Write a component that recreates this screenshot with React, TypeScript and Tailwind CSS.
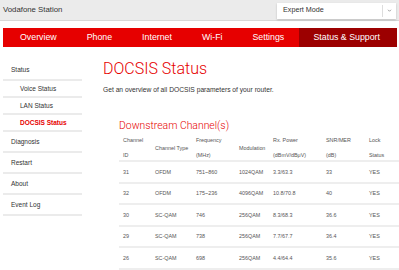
const NAV_ITEMS = ["Overview", "Phone", "Internet", "Wi-Fi", "Settings"];

const SIDEBAR = [
  { label: "Status", sub: false },
  { label: "Voice Status", sub: true },
  { label: "LAN Status", sub: true },
  { label: "DOCSIS Status", sub: true, active: true },
  { label: "Diagnosis", sub: false },
  { label: "Restart", sub: false },
  { label: "About", sub: false },
  { label: "Event Log", sub: false },
];

const ROWS = [
  ["31", "OFDM", "751~860", "1024QAM", "3.3/63.3", "33", "YES"],
  ["32", "OFDM", "175~236", "4096QAM", "10.8/70.8", "40", "YES"],
  ["30", "SC-QAM", "746", "256QAM", "8.3/68.3", "36.6", "YES"],
  ["29", "SC-QAM", "738", "256QAM", "7.7/67.7", "36.4", "YES"],
  ["26", "SC-QAM", "698", "256QAM", "4.4/64.4", "35.6", "YES"],
];

const GRID = "grid grid-cols-[32px_41px_43px_34px_53px_43px_32px]";

export default function App() {
  return (
    <div className="h-[270px] w-[399px] overflow-hidden bg-white font-['Liberation_Sans',Arial,sans-serif] text-[#333]">
      {/* top bar */}
      <div className="flex h-[21px] items-center justify-between border-b border-[#d8d8d8] bg-[#ebebeb] pl-[3px] pr-[3px]">
        <span className="text-[7.8px]">Vodafone Station</span>
        <div className="mt-[1px] flex h-[16px] w-[119px] items-center bg-white shadow-[0_1px_2px_rgba(0,0,0,0.2)]">
          <span className="flex-1 pl-[6px] text-[7.2px]">Expert Mode</span>
          <span className="h-[12px] w-px bg-[#ddd]" />
          <svg className="mx-[4px] h-[5px] w-[5px] text-[#777]" viewBox="0 0 10 10" fill="none" stroke="currentColor" strokeWidth={1.4}>
            <path d="M2 3.5l3 3 3-3" />
          </svg>
        </div>
      </div>

      {/* main nav */}
      <div className="ml-[3px] mt-[7px] flex h-[19px] w-[394px] items-center bg-[#e60000] text-[8.8px] text-white">
        {NAV_ITEMS.map((item, i) => (
          <span key={item} className={`px-[15px] ${i === 0 ? "pl-[17px]" : ""}`}>
            {item}
          </span>
        ))}
        <span className="ml-auto flex h-full items-center bg-[#9c0000] pl-[14px] pr-[17px]">
          Status &amp; Support
        </span>
      </div>

      <div className="flex">
        {/* sidebar */}
        <div className="ml-[3px] mt-[13px] w-[79px] text-[6.5px]">
          {SIDEBAR.map((s) => (
            <div
              key={s.label}
              className={`flex items-center border-b-2 border-[#ebebeb] ${
                s.sub ? "h-[17px] pl-[17px]" : "h-[21px] pl-[8px]"
              } ${s.active ? "font-bold text-[#e60000]" : ""}`}
            >
              {s.label}
            </div>
          ))}
        </div>

        {/* content */}
        <div className="ml-[21px] flex-1">
          <h1 className="mt-[14px] font-['Roboto',sans-serif] text-[16px] font-light leading-[16px] text-[#e60000]">
            DOCSIS Status
          </h1>
          <p className="mt-[8px] text-[6.7px]">
            Get an overview of all DOCSIS parameters of your router.
          </p>
          <h2 className="ml-[16px] mt-[25px] font-['Roboto',sans-serif] text-[10.4px] font-light leading-[12px] text-[#e60000]">
            Downstream Channel(s)
          </h2>

          <div className="ml-[16px] mt-[1px] text-[5.4px] text-[#555]">
            <div className={`${GRID} h-[29px] items-center border-b-2 border-[#eeeeee] leading-[15px]`}>
              <span className="pl-[4px]">Channel<br />ID</span>
              <span className="pl-[4px]">Channel Type</span>
              <span className="pl-[4px]">Frequency<br />(MHz)</span>
              <span className="pl-[4px]">Modulation</span>
              <span className="pl-[4px]">Rx. Power<br />(dBmV/dBμV)</span>
              <span className="pl-[4px]">SNR/MER<br />(dB)</span>
              <span className="pl-[4px]">Lock<br />Status</span>
            </div>
            {ROWS.map((r) => (
              <div key={r[0]} className={`${GRID} h-[21.5px] items-center border-b-2 border-[#eeeeee]`}>
                {r.map((c, j) => (
                  <span key={j} className="pl-[4px]">
                    {c}
                  </span>
                ))}
              </div>
            ))}
          </div>
        </div>
      </div>
    </div>
  );
}
